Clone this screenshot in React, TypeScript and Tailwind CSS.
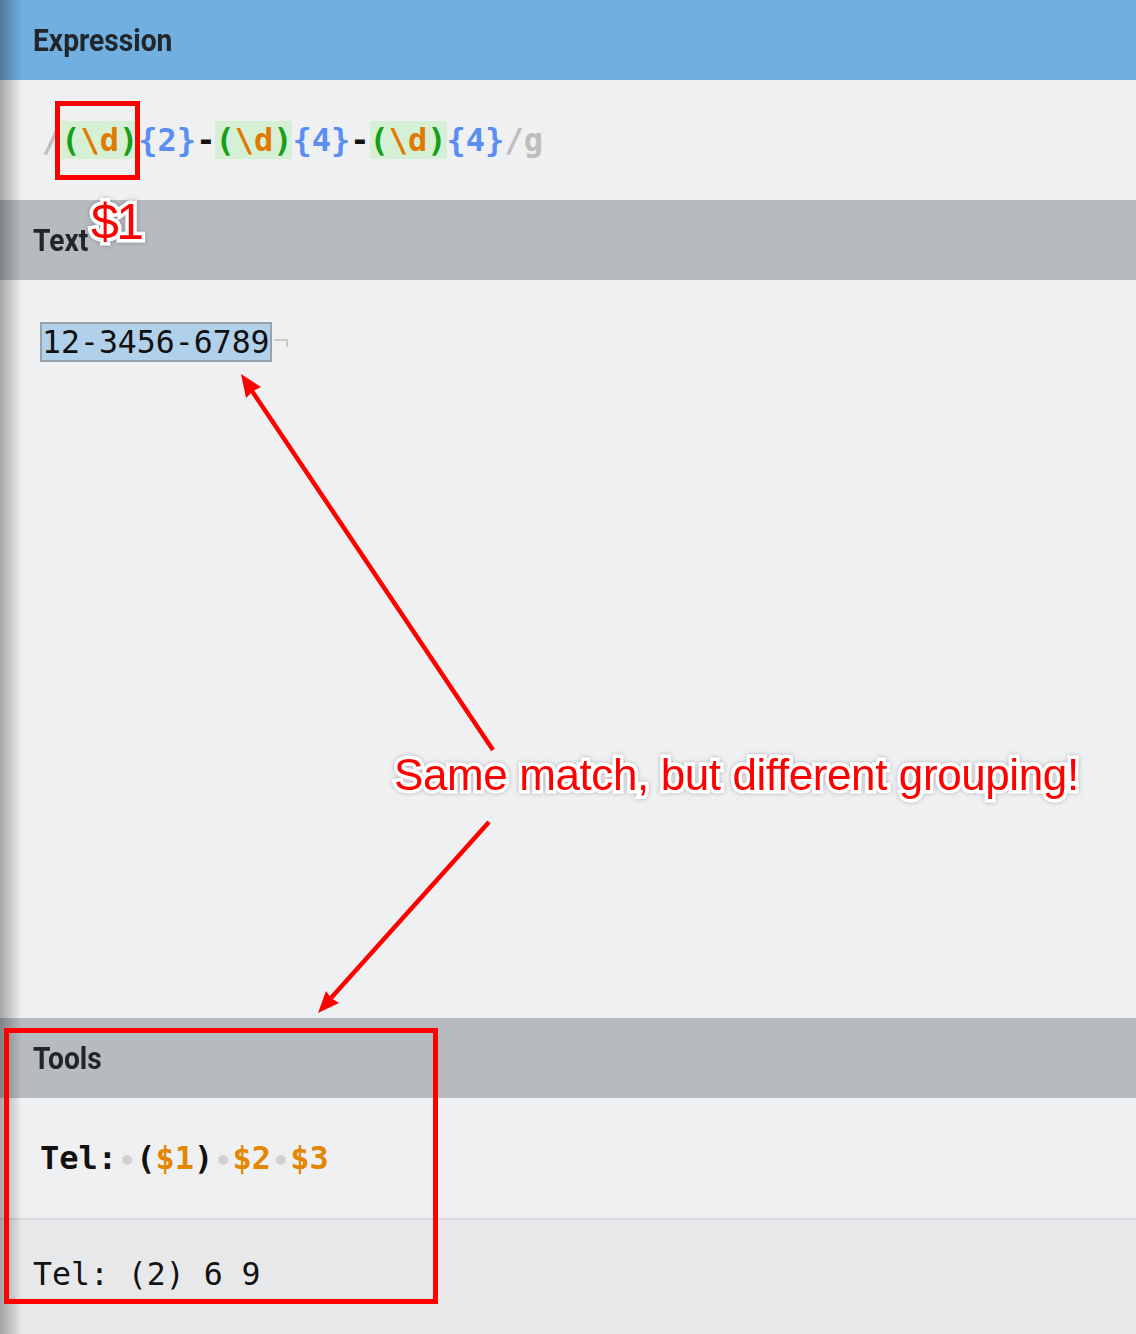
import React from "react";

const mono = "font-['DejaVu_Sans_Mono','Liberation_Mono',monospace]";
const outline = "[-webkit-text-stroke:7px_white] [paint-order:stroke_fill] drop-shadow-[0_0_2px_rgba(0,0,0,0.25)]";

function Header({ title, tone }: { title: string; tone: "blue" | "gray" }) {
  const bg = tone === "blue" ? "bg-[#70afdf]" : "bg-[#b6bbbf]";
  return (
    <div className={`${bg} h-[80px] flex items-center pl-[33px]`}>
      <span className="inline-block origin-left scale-x-[0.88] font-['Roboto',sans-serif] font-bold text-[32px] text-[#22262a] leading-none">
        {title}
      </span>
    </div>
  );
}

function Group() {
  return (
    <span className="bg-[#d5f0d5]">
      <span className="text-[#17a017]">(</span>
      <span className="text-[#e07a00]">\d</span>
      <span className="text-[#17a017]">)</span>
    </span>
  );
}

function Dot() {
  return (
    <span className="inline-flex w-[0.6em] justify-center align-middle">
      <span className="w-[10px] h-[10px] rounded-full bg-[#cfd1d3]" />
    </span>
  );
}

export default function App() {
  return (
    <div className="relative w-[1136px] h-[1334px] overflow-hidden bg-[#eff0f2]">
      <Header title="Expression" tone="blue" />
      <div className="h-[120px] flex items-center pl-[42px]">
        <div className={`${mono} font-bold text-[32px] leading-[40px] whitespace-pre`}>
          <span className="text-[#bdbdbd]">/</span>
          <Group />
          <span className="text-[#5a8ef2]">{"{2}"}</span>
          <span className="text-[#111]">-</span>
          <Group />
          <span className="text-[#5a8ef2]">{"{4}"}</span>
          <span className="text-[#111]">-</span>
          <Group />
          <span className="text-[#5a8ef2]">{"{4}"}</span>
          <span className="text-[#bdbdbd]">/g</span>
        </div>
      </div>

      <Header title="Text" tone="gray" />
      <div className="h-[738px] pt-[42px] pl-[40px]">
        <div className="flex items-center">
          <span className={`${mono} text-[31.5px] leading-[36px] text-[#111] bg-[#b1d0ea] border-2 border-[#98a2ab]`}>
            12-3456-6789
          </span>
          <span className="ml-[2px] mt-[2px] w-[14px] h-[8px] border-t-2 border-r-2 border-[#cbcbcb]" />
        </div>
      </div>

      <Header title="Tools" tone="gray" />
      <div className="h-[120px] flex items-center pl-[40px]">
        <div className={`${mono} font-bold text-[32px] leading-[40px] whitespace-pre text-[#111]`}>
          <span>Tel:</span>
          <Dot />
          <span>(</span>
          <span className="text-[#e38600]">$1</span>
          <span>)</span>
          <Dot />
          <span className="text-[#e38600]">$2</span>
          <Dot />
          <span className="text-[#e38600]">$3</span>
        </div>
      </div>
      <div className="h-[2px] bg-[#d8dadd]" />
      <div className="h-[114px] bg-[#e7e8ea] pt-[34px] pl-[33px]">
        <div className={`${mono} text-[31.5px] leading-[40px] whitespace-pre text-[#111]`}>Tel: (2) 6 9</div>
      </div>

      {/* annotations */}
      <div className="absolute left-0 top-0 w-[22px] h-full bg-gradient-to-r from-[rgba(0,0,0,0.3)] to-transparent" />
      <div className="absolute left-[55px] top-[101px] w-[85px] h-[79px] border-[5px] border-[#ff0000]" />
      <div className="absolute left-[4px] top-[1028px] w-[434px] h-[276px] border-[5px] border-[#ff0000]" />
      <div
        className={`absolute left-[91px] top-[197px] font-['Liberation_Sans',Arial,sans-serif] text-[50px] leading-none tracking-[-2.5px] text-[#ff0000] ${outline}`}
      >
        $1
      </div>
      <div
        className={`absolute left-[394px] top-[753px] whitespace-nowrap font-['Liberation_Sans',Arial,sans-serif] text-[44px] leading-none tracking-[-0.4px] text-[#ff0000] [-webkit-text-fill-color:#ff0000] ${outline}`}
      >
        Same match, but different grouping!
      </div>
      <svg className="absolute left-0 top-0" width="1136" height="1334" viewBox="0 0 1136 1334">
        <line x1="493" y1="750" x2="252" y2="391" stroke="#ff0000" strokeWidth="4.5" />
        <polygon points="241,374 261,387 253,391 246,398" fill="#ff0000" />
        <line x1="489" y1="822" x2="331" y2="998" stroke="#ff0000" strokeWidth="4.5" />
        <polygon points="318,1013 326,991 331,998 339,1003" fill="#ff0000" />
      </svg>
    </div>
  );
}
